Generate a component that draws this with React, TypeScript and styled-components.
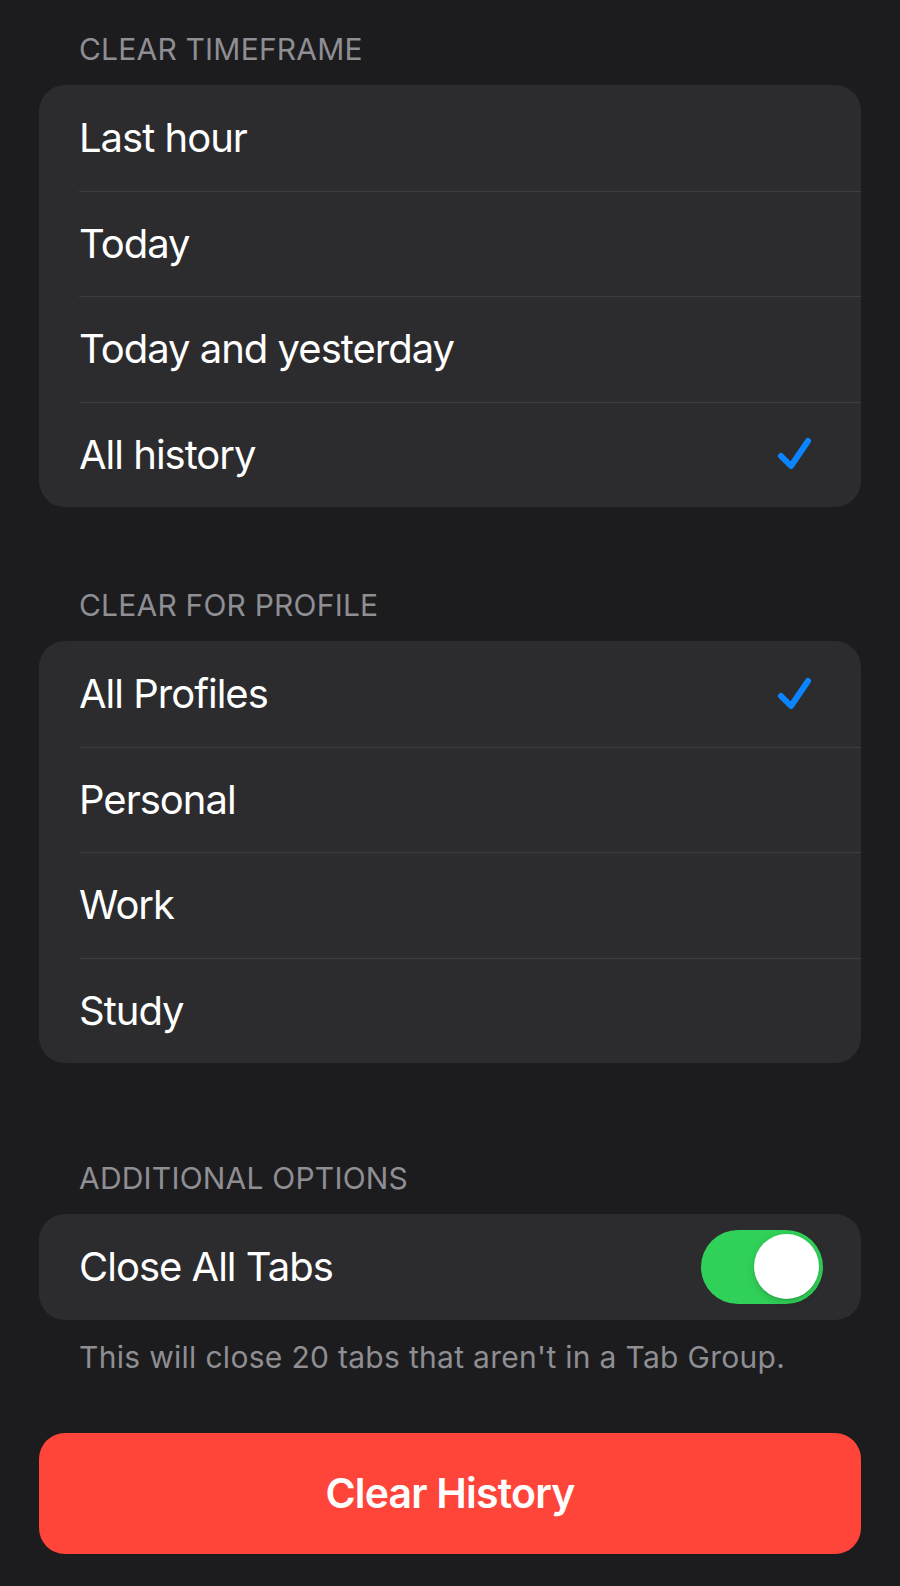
import React from "react";
import styled, { createGlobalStyle } from "styled-components";

const GlobalStyle = createGlobalStyle`
  html, body {
    margin: 0;
    padding: 0;
    background: #1c1c1e;
  }
  body {
    font-family: Inter, "Liberation Sans", Arial, sans-serif;
    -webkit-font-smoothing: antialiased;
  }
`;

const Page = styled.div`
  width: 822px;
  margin: 0 auto;
  padding: 31px 0 32px;
  display: flex;
  flex-direction: column;
  min-height: 1586px;
  box-sizing: border-box;
`;

const Section = styled.section<{ $after: number }>`
  display: flex;
  flex-direction: column;
  margin-bottom: ${({ $after }) => $after}px;
`;

const SectionHeader = styled.div`
  padding-left: 40px;
  margin-bottom: 18px;
  font-size: 30px;
  line-height: 36px;
  color: #8e8e93;
  text-transform: uppercase;
  letter-spacing: 0.2px;
`;

const Card = styled.div`
  background: #2c2c2e;
  border-radius: 26px;
  overflow: hidden;
`;

const Row = styled.div<{ $divider: boolean }>`
  position: relative;
  height: 105.5px;
  display: flex;
  align-items: center;
  justify-content: space-between;
  padding: 0 45px 0 40px;
  box-sizing: border-box;

  &::before {
    content: "";
    display: ${({ $divider }) => ($divider ? "block" : "none")};
    position: absolute;
    top: 0;
    left: 40px;
    right: 0;
    height: 1px;
    background: #3d3d40;
  }
`;

const Label = styled.span`
  font-size: 40px;
  color: #ffffff;
  letter-spacing: -1px;
`;

const Note = styled.div`
  padding-left: 40px;
  margin-top: 19px;
  font-size: 30px;
  line-height: 36px;
  color: #8e8e93;
  letter-spacing: 0.3px;
`;

const Toggle = styled.div<{ $on: boolean }>`
  width: 122px;
  height: 74px;
  border-radius: 37px;
  background: ${({ $on }) => ($on ? "#30d158" : "#39393d")};
  display: flex;
  align-items: center;
  justify-content: ${({ $on }) => ($on ? "flex-end" : "flex-start")};
  padding: 0 4px;
  box-sizing: border-box;
  margin-right: -7px;
`;

const Knob = styled.div`
  width: 65px;
  height: 65px;
  border-radius: 50%;
  background: #ffffff;
  box-shadow: 0 3px 8px rgba(0, 0, 0, 0.15), 0 1px 1px rgba(0, 0, 0, 0.16);
`;

const ClearButton = styled.button`
  margin-top: 58px;
  width: 100%;
  height: 121px;
  border: none;
  border-radius: 26px;
  background: #ff453a;
  color: #ffffff;
  font-family: inherit;
  font-size: 41px;
  font-weight: 600;
  letter-spacing: -0.8px;
  cursor: pointer;
`;

const Check = () => (
  <svg width="42" height="40" viewBox="0 0 42 40">
    <path
      d="M7 22 L17 32 L34 7"
      fill="none"
      stroke="#0a84ff"
      strokeWidth="6"
      strokeLinecap="round"
      strokeLinejoin="round"
    />
  </svg>
);

type Option = { label: string; checked?: boolean };

const timeframes: Option[] = [
  { label: "Last hour" },
  { label: "Today" },
  { label: "Today and yesterday" },
  { label: "All history", checked: true },
];

const profiles: Option[] = [
  { label: "All Profiles", checked: true },
  { label: "Personal" },
  { label: "Work" },
  { label: "Study" },
];

const OptionList = ({ items }: { items: Option[] }) => (
  <Card>
    {items.map((item, i) => (
      <Row key={item.label} $divider={i > 0}>
        <Label>{item.label}</Label>
        {item.checked && <Check />}
      </Row>
    ))}
  </Card>
);

const App = () => {
  return (
    <>
      <GlobalStyle />
      <Page>
        <Section $after={80}>
          <SectionHeader>Clear Timeframe</SectionHeader>
          <OptionList items={timeframes} />
        </Section>
        <Section $after={97}>
          <SectionHeader>Clear for Profile</SectionHeader>
          <OptionList items={profiles} />
        </Section>
        <Section $after={0}>
          <SectionHeader>Additional Options</SectionHeader>
          <Card>
            <Row $divider={false}>
              <Label>Close All Tabs</Label>
              <Toggle $on={true}>
                <Knob />
              </Toggle>
            </Row>
          </Card>
          <Note>This will close 20 tabs that aren't in a Tab Group.</Note>
        </Section>
        <ClearButton>Clear History</ClearButton>
      </Page>
    </>
  );
};

export default App;
